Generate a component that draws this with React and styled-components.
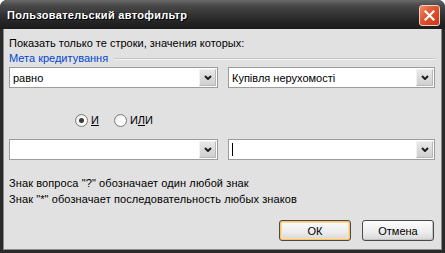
import React from "react";
import styled, { createGlobalStyle } from "styled-components";

const GlobalStyle = createGlobalStyle`
  html, body {
    margin: 0;
    padding: 0;
    background: #ffffff;
  }
  body {
    font-family: "Liberation Sans", Arial, sans-serif;
    font-size: 11px;
  }
`;

const Window = styled.div`
  width: 445px;
  height: 253px;
  display: flex;
  flex-direction: column;
  border-radius: 7px 7px 0 0;
  overflow: hidden;
  background: #2a2a2a;
`;

const TitleBar = styled.div`
  height: 29px;
  flex: none;
  display: flex;
  align-items: center;
  justify-content: space-between;
  padding: 0 5px 0 7px;
  background: linear-gradient(#6a6a6a 0%, #4a4a4a 18%, #333333 50%, #222222 80%, #1c1c1c 100%);
`;

const Title = styled.span`
  color: #ffffff;
  font-weight: bold;
  font-size: 11px;
  letter-spacing: 0.3px;
  text-shadow: 1px 1px 0 #000000;
`;

const CloseButton = styled.div`
  width: 19px;
  height: 19px;
  border: 1px solid #f2d2c8;
  border-radius: 3px;
  background: linear-gradient(135deg, #f08a6a 0%, #e0532c 45%, #c8361a 100%);
  display: flex;
  align-items: center;
  justify-content: center;
  margin-top: 1px;
`;

const Frame = styled.div`
  flex: 1;
  display: flex;
  padding: 0 3px 3px 3px;
  background: #2a2a2a;
`;

const Body = styled.div`
  flex: 1;
  display: flex;
  flex-direction: column;
  background: #e1e1e1;
  border: 1px solid #8a8a8a;
  border-top: none;
  padding: 0 6px 0 5px;
  color: #000000;
`;

const Line = styled.div`
  height: ${(p) => p.h || 14}px;
  line-height: ${(p) => p.h || 14}px;
  margin-top: ${(p) => p.mt || 0}px;
  white-space: nowrap;
`;

const FieldRow = styled.div`
  display: flex;
  align-items: center;
  gap: 6px;
  height: 14px;
  margin-top: 1px;
  color: #0046d5;
`;

const Etched = styled.div`
  flex: 1;
  height: 0;
  border-top: 1px solid #c6c6c6;
  border-bottom: 1px solid #f4f4f4;
  margin-top: 2px;
`;

const ComboRow = styled.div`
  display: flex;
  justify-content: space-between;
  margin-top: ${(p) => p.mt}px;
`;

const Combo = styled.div`
  width: ${(p) => p.w}px;
  height: 21px;
  box-sizing: border-box;
  border: 1px solid #9c9c9c;
  background: #ffffff;
  display: flex;
  align-items: stretch;
`;

const ComboText = styled.div`
  flex: 1;
  padding-left: 3px;
  display: flex;
  align-items: center;
  white-space: nowrap;
`;

const Caret = styled.span`
  width: 1px;
  height: 13px;
  background: #000000;
`;

const ArrowBtn = styled.div`
  width: 17px;
  margin: 1px;
  box-sizing: border-box;
  border: 1px solid #b8b8b8;
  border-top-color: #f2f2f2;
  border-left-color: #f2f2f2;
  background: linear-gradient(#e8e8e8, #cfcfcf);
  display: flex;
  align-items: center;
  justify-content: center;
`;

const RadioRow = styled.div`
  display: flex;
  align-items: center;
  height: 14px;
  margin-top: 25px;
  padding-left: 66px;
  gap: 15px;
`;

const RadioItem = styled.label`
  display: flex;
  align-items: center;
  gap: 3px;
`;

const RadioCircle = styled.span`
  width: 13px;
  height: 13px;
  box-sizing: border-box;
  border-radius: 50%;
  border: 1px solid #7d7d7d;
  background: radial-gradient(circle at 60% 60%, #ffffff 30%, #dcdcdc 100%);
  display: flex;
  align-items: center;
  justify-content: center;
  &::after {
    content: "";
    width: 5px;
    height: 5px;
    border-radius: 50%;
    background: ${(p) => (p.checked ? "#3a3a3a" : "transparent")};
  }
`;

const U = styled.span`
  text-decoration: underline;
`;

const Hints = styled.div`
  margin-top: 15px;
  letter-spacing: 0.1px;
`;

const Buttons = styled.div`
  display: flex;
  justify-content: flex-end;
  gap: 11px;
  margin-top: 13px;
  padding-right: 1px;
`;

const Button = styled.div`
  width: 72px;
  height: 21px;
  box-sizing: border-box;
  border: 1px solid #4a4a4a;
  border-radius: 3px;
  background: linear-gradient(#fcfcfc, #ececec 60%, #d6d6d6);
  display: flex;
  align-items: center;
  justify-content: center;
  box-shadow: ${(p) =>
    p.primary ? "inset 0 0 0 1px #f6c26a, inset 0 0 0 2px #fbdca0" : "inset -1px -1px 0 #c4c4c4"};
`;

const Chevron = () => (
  <svg width="8" height="5" viewBox="0 0 8 5">
    <path d="M1 1 L4 4 L7 1" fill="none" stroke="#1e1e1e" strokeWidth="2" />
  </svg>
);

const CloseX = () => (
  <svg width="11" height="11" viewBox="0 0 11 11">
    <path d="M1.5 1.5 L9.5 9.5 M9.5 1.5 L1.5 9.5" stroke="#ffffff" strokeWidth="2.2" strokeLinecap="square" />
  </svg>
);

function ComboBox({ width, value, caret }) {
  return (
    <Combo w={width}>
      <ComboText>{caret ? <Caret /> : value}</ComboText>
      <ArrowBtn>
        <Chevron />
      </ArrowBtn>
    </Combo>
  );
}

export default function App() {
  return (
    <>
      <GlobalStyle />
      <Window>
        <TitleBar>
          <Title>Пользовательский автофильтр</Title>
          <CloseButton>
            <CloseX />
          </CloseButton>
        </TitleBar>
        <Frame>
          <Body>
            <Line mt={7}>Показать только те строки, значения которых:</Line>
            <FieldRow>
              <span>Мета кредитування</span>
              <Etched />
            </FieldRow>
            <ComboRow mt={2}>
              <ComboBox width={209} value="равно" />
              <ComboBox width={207} value="Купівля нерухомості" />
            </ComboRow>
            <RadioRow>
              <RadioItem>
                <RadioCircle checked />
                <U>И</U>
              </RadioItem>
              <RadioItem>
                <RadioCircle />
                <span>
                  И<U>Л</U>И
                </span>
              </RadioItem>
            </RadioRow>
            <ComboRow mt={12}>
              <ComboBox width={209} value="" />
              <ComboBox width={207} caret />
            </ComboRow>
            <Hints>
              <Line h={16}>Знак вопроса "?" обозначает один любой знак</Line>
              <Line h={16}>Знак "*" обозначает последовательность любых знаков</Line>
            </Hints>
            <Buttons>
              <Button primary>ОК</Button>
              <Button>Отмена</Button>
            </Buttons>
          </Body>
        </Frame>
      </Window>
    </>
  );
}
